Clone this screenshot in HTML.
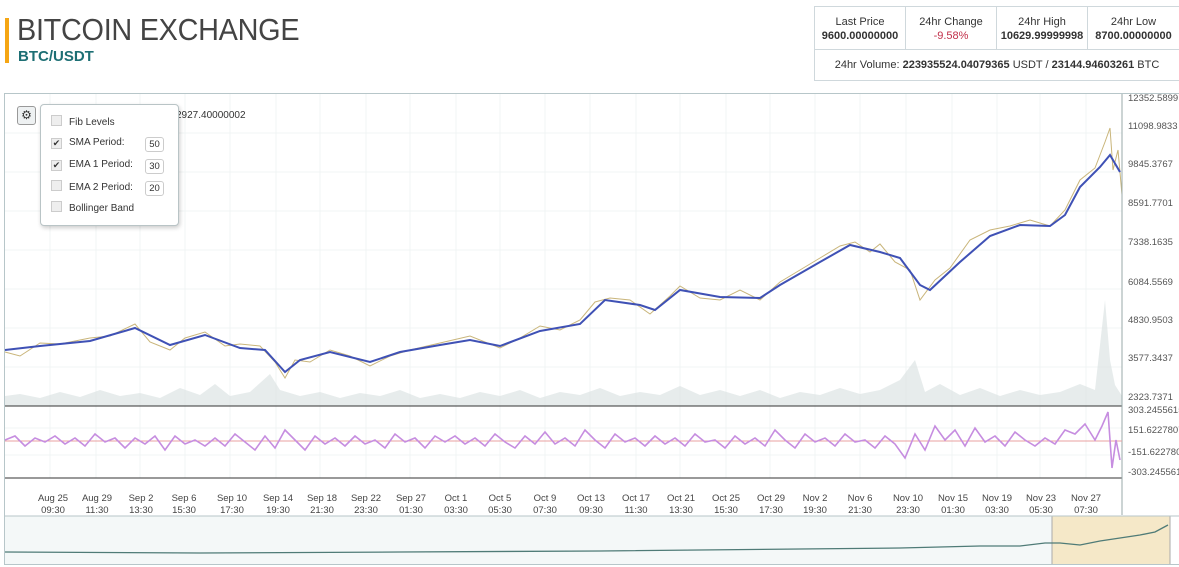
<!DOCTYPE html>
<html><head><meta charset="utf-8"><style>
body{margin:0;width:1179px;height:567px;background:#fff;font-family:"Liberation Sans",Arial,sans-serif;position:relative;overflow:hidden}
.bar{position:absolute;left:5px;top:18px;width:4px;height:45px;background:#f5a614}
.title{position:absolute;left:17px;top:12px;font-size:31px;color:#444;font-weight:normal;letter-spacing:-0.3px;transform:scaleX(0.93);transform-origin:left}
.sub{position:absolute;left:18px;top:48px;font-size:15px;font-weight:bold;color:#1d6f74}
.stats{position:absolute;left:814px;top:6px;width:364px;height:73px;border:1px solid #cfd8dc;font-size:11px;color:#333}
.stats .c{position:absolute;top:0;height:42px;border-right:1px solid #cfd8dc;text-align:center;padding-top:8px;box-sizing:border-box;line-height:14px}
.stats .c b{display:block;font-size:11px}
.stats .v{position:absolute;left:0;top:42px;width:100%;height:31px;border-top:1px solid #cfd8dc;text-align:center;line-height:30px;font-size:11px}
.chart{position:absolute;left:4px;top:93px;width:1175px;height:472px;border:1px solid #b7c6c9;border-right:none;box-sizing:border-box}
.ax{position:absolute;left:1128px;font-size:9.5px;color:#555}
.dl{position:absolute;top:493px;font-size:9.5px;color:#444;text-align:center;width:50px;line-height:12px}
.menu{position:absolute;left:40px;top:104px;width:137px;height:120px;background:#fff;border:1px solid #b9c4c6;border-radius:4px;box-shadow:1px 2px 4px rgba(0,0,0,.2);font-size:10px;color:#333}
.menu div{position:absolute;left:10px;height:14px;line-height:14px}
.cb{display:inline-block;width:9px;height:9px;border:1px solid #ccc;background:#eee;vertical-align:-1px;margin-right:7px;font-size:9px;line-height:9px;text-align:center}
.in{position:absolute;left:104px;width:17px;height:13px;border:1px solid #ccc;border-radius:3px;font-size:9.5px;text-align:center;line-height:13px}
.gear{position:absolute;left:17px;top:106px;width:17px;height:17px;border:1px solid #999;border-radius:3px;background:#eef1f2;font-size:12px;text-align:center;line-height:17px;color:#333}
</style></head><body>
<div class="bar"></div>
<div class="title">BITCOIN EXCHANGE</div>
<div class="sub">BTC/USDT</div>
<div class="stats">
<div class="c" style="left:0;width:91px">Last Price<b>9600.00000000</b></div>
<div class="c" style="left:91px;width:91px">24hr Change<b style="color:#c2304a;font-weight:normal">-9.58%</b></div>
<div class="c" style="left:182px;width:91px">24hr High<b>10629.99999998</b></div>
<div class="c" style="left:273px;width:91px;border-right:none">24hr Low<b>8700.00000000</b></div>
<div class="v">24hr Volume: <b>223935524.04079365</b> USDT / <b>23144.94603261</b> BTC</div>
</div>
<div class="chart"></div>
<svg style="position:absolute;left:0;top:0" width="1179" height="567">
<g stroke="#f0f4f4" stroke-width="1">
<path d="M50 94V478M96 94V478M140 94V478M185 94V478M230 94V478M276 94V478M320 94V478M366 94V478M410 94V478M456 94V478M500 94V478M545 94V478M590 94V478M636 94V478M680 94V478M726 94V478M770 94V478M815 94V478M860 94V478M906 94V478M952 94V478M997 94V478M1040 94V478M1086 94V478"/>
<path d="M5 133H1122M5 172H1122M5 211H1122M5 250H1122M5 289H1122M5 328H1122M5 367H1122M5 428H1122M5 455H1122"/>
</g>
<g fill="#dde4e4" opacity=".7">
<path d="M5 406L5 396 20 394 40 398 60 392 80 397 100 390 120 396 140 393 160 398 180 388 200 395 215 384 230 396 250 392 270 374 280 390 300 396 320 392 340 398 360 393 380 396 400 390 420 398 440 394 460 398 480 392 500 396 520 390 540 398 560 392 580 395 600 388 620 396 640 392 660 395 680 386 700 395 720 390 740 396 760 390 780 398 800 392 820 395 840 388 860 394 880 390 900 380 915 360 925 392 940 384 960 395 980 388 1000 396 1020 390 1040 395 1060 392 1080 384 1095 390 1105 300 1110 360 1115 385 1122 396 1122 406Z"/>
</g>
<polyline fill="none" stroke="#c9b57a" stroke-width="1" points="5,352 20,356 40,343 60,344 90,338 110,336 135,324 150,342 170,350 185,338 205,332 225,346 240,344 260,346 275,362 285,378 295,360 310,362 330,350 350,356 370,366 390,356 410,350 440,343 470,336 500,348 520,338 540,326 560,330 580,320 595,302 610,298 630,300 650,314 670,296 680,286 700,298 720,300 740,290 760,300 780,282 800,270 820,258 840,246 855,242 870,252 880,244 895,262 910,270 920,300 935,280 950,268 970,240 990,230 1010,226 1030,220 1050,226 1065,210 1080,180 1095,168 1105,142 1110,128 1113,170 1118,150 1122,195"/>
<polyline fill="none" stroke="#3f51b5" stroke-width="2" points="5,350 40,346 90,341 135,328 170,345 205,335 240,348 265,350 285,372 300,360 330,352 370,362 400,352 440,345 470,340 500,346 540,331 580,324 605,300 640,305 655,310 680,290 720,297 760,298 780,285 820,262 850,245 880,252 900,258 920,285 930,290 960,262 990,236 1020,225 1050,226 1065,215 1080,187 1100,167 1110,155 1120,172"/>
<line x1="5" y1="406" x2="1122" y2="406" stroke="#333"/>
<line x1="5" y1="478" x2="1122" y2="478" stroke="#333"/>
<line x1="1122" y1="94" x2="1122" y2="515" stroke="#9aa" />
<line x1="5" y1="441" x2="1122" y2="441" stroke="#e8a0a0" stroke-width="1"/>
<polyline fill="none" stroke="#c68de0" stroke-width="1.6" points="5,440 15,436 25,446 35,438 45,442 55,436 65,444 75,438 85,446 95,434 105,442 115,438 125,448 135,438 145,444 155,436 165,450 175,436 185,444 195,440 205,446 215,438 225,446 235,434 245,442 255,450 265,436 275,448 285,430 295,440 305,450 315,436 325,444 335,438 345,446 355,436 365,444 375,440 385,448 395,434 405,442 415,438 425,448 435,436 445,442 455,436 465,444 475,438 485,446 495,434 505,442 515,448 525,436 535,444 545,432 555,444 565,438 575,446 585,430 595,440 605,448 615,434 625,442 635,438 645,446 655,436 665,444 675,438 685,446 695,434 705,442 715,440 725,448 735,436 745,444 755,438 765,446 775,430 785,440 795,448 805,434 815,442 825,438 835,446 845,434 855,442 865,440 875,448 885,436 895,444 905,458 915,434 925,450 935,426 945,440 955,430 965,446 975,428 985,442 995,436 1005,446 1015,432 1025,440 1035,446 1045,438 1055,444 1065,430 1075,434 1085,424 1095,440 1102,426 1108,412 1112,468 1116,440 1120,460"/>
<rect x="5" y="516" width="1117" height="48" fill="#f4f8f8"/>
<rect x="1052" y="516" width="118" height="48" fill="#f5e8c8"/>
<line x1="1052" y1="516" x2="1052" y2="564" stroke="#aaa"/><line x1="1170" y1="516" x2="1170" y2="564" stroke="#aaa"/>
<line x1="5" y1="516" x2="1179" y2="516" stroke="#b7c6c9"/>
<polyline fill="none" stroke="#4f7b77" stroke-width="1.3" points="5,552 200,553 400,552 600,551 800,549 900,548 980,546 1020,546 1045,543 1060,543 1080,545 1100,541 1120,538 1140,535 1155,532 1168,525"/>
</svg>
<div class="ax" style="top:93px">12352.5899</div>
<div class="ax" style="top:121px">11098.9833</div>
<div class="ax" style="top:159px">9845.3767</div>
<div class="ax" style="top:198px">8591.7701</div>
<div class="ax" style="top:237px">7338.1635</div>
<div class="ax" style="top:277px">6084.5569</div>
<div class="ax" style="top:315px">4830.9503</div>
<div class="ax" style="top:353px">3577.3437</div>
<div class="ax" style="top:392px">2323.7371</div>
<div class="ax" style="top:405px">303.2455615</div>
<div class="ax" style="top:425px">151.6227807</div>
<div class="ax" style="top:447px">-151.622780</div>
<div class="ax" style="top:467px">-303.245561</div>
<div class="dl" style="left:28px">Aug 25<br>09:30</div>
<div class="dl" style="left:72px">Aug 29<br>11:30</div>
<div class="dl" style="left:116px">Sep 2<br>13:30</div>
<div class="dl" style="left:159px">Sep 6<br>15:30</div>
<div class="dl" style="left:207px">Sep 10<br>17:30</div>
<div class="dl" style="left:253px">Sep 14<br>19:30</div>
<div class="dl" style="left:297px">Sep 18<br>21:30</div>
<div class="dl" style="left:341px">Sep 22<br>23:30</div>
<div class="dl" style="left:386px">Sep 27<br>01:30</div>
<div class="dl" style="left:431px">Oct 1<br>03:30</div>
<div class="dl" style="left:475px">Oct 5<br>05:30</div>
<div class="dl" style="left:520px">Oct 9<br>07:30</div>
<div class="dl" style="left:566px">Oct 13<br>09:30</div>
<div class="dl" style="left:611px">Oct 17<br>11:30</div>
<div class="dl" style="left:656px">Oct 21<br>13:30</div>
<div class="dl" style="left:701px">Oct 25<br>15:30</div>
<div class="dl" style="left:746px">Oct 29<br>17:30</div>
<div class="dl" style="left:790px">Nov 2<br>19:30</div>
<div class="dl" style="left:835px">Nov 6<br>21:30</div>
<div class="dl" style="left:883px">Nov 10<br>23:30</div>
<div class="dl" style="left:928px">Nov 15<br>01:30</div>
<div class="dl" style="left:972px">Nov 19<br>03:30</div>
<div class="dl" style="left:1016px">Nov 23<br>05:30</div>
<div class="dl" style="left:1061px">Nov 27<br>07:30</div>
<div style="position:absolute;left:176px;top:110px;font-size:10px;color:#333">2927.40000002</div>
<div class="gear">⚙</div>
<div class="menu">
<div style="top:10px"><span class="cb"></span>Fib Levels</div>
<div style="top:31px"><span class="cb">✔</span>SMA Period:</div><span class="in" style="top:32px">50</span>
<div style="top:53px"><span class="cb">✔</span>EMA 1 Period:</div><span class="in" style="top:54px">30</span>
<div style="top:75px"><span class="cb"></span>EMA 2 Period:</div><span class="in" style="top:76px">20</span>
<div style="top:96px"><span class="cb"></span>Bollinger Band</div>
</div>
</body></html>
